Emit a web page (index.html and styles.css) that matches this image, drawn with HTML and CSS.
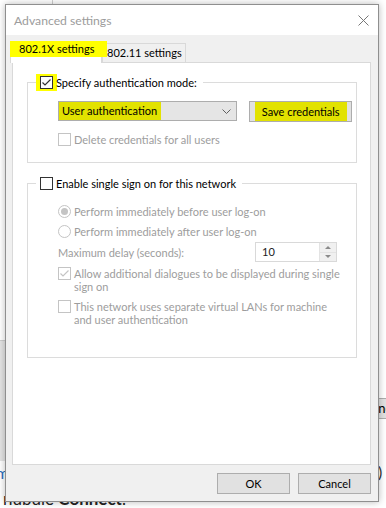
FILE: index.html
```html
<!DOCTYPE html>
<html lang="en">
<head>
    <meta charset="UTF-8">
    <title>Advanced settings</title>
    <link rel="stylesheet" href="styles.css">
</head>
<body>
    <div class="desk">
        <div class="desk-rule"></div>
        <div class="desk-panel"></div>
        <span class="desk-link">lm</span>
        <div class="desk-button">Done</div>
        <span class="desk-paren">)</span>
        <p class="desk-text">nubule <b>Connect</b>.</p>
    </div>

    <div class="dialog">
        <div class="titlebar">
            <span class="title">Advanced settings</span>
            <svg class="close" width="11" height="11" viewBox="0 0 11 11">
                <path d="M0.5 0.5 L10.5 10.5 M10.5 0.5 L0.5 10.5" stroke="#777" stroke-width="1" fill="none"/>
            </svg>
        </div>

        <div class="dialog-body">
            <div class="tabs">
                <div class="tab active"><span class="hl hl-tab">802.1X settings</span></div>
                <div class="tab">802.11 settings</div>
            </div>

            <div class="panel">
                <fieldset class="group group-auth">
                    <legend>
                        <span class="legend-box hl">
                            <span class="box checked">
                                <svg width="11" height="11" viewBox="0 0 11 11"><path d="M1.5 5.5 L4 8 L9.5 2.5" stroke="#333" stroke-width="1.2" fill="none"/></svg>
                            </span>
                        </span>
                        <span class="legend-text">Specify authentication mode:</span>
                    </legend>
                    <div class="group-body">
                        <div class="auth-row">
                            <div class="combo">
                                <span class="hl hl-dark combo-text">User authentication</span>
                                <svg class="chevron" width="9" height="5" viewBox="0 0 9 5"><path d="M0.5 0.5 L4.5 4.5 L8.5 0.5" stroke="#606060" stroke-width="1" fill="none"/></svg>
                            </div>
                            <div class="btn btn-save"><span class="hl hl-dark">Save credentials</span></div>
                        </div>
                        <div class="option disabled option-delete">
                            <span class="box"></span>
                            <span>Delete credentials for all users</span>
                        </div>
                    </div>
                </fieldset>

                <fieldset class="group group-sso">
                    <legend>
                        <span class="legend-box"><span class="box"></span></span>
                        <span class="legend-text">Enable single sign on for this network</span>
                    </legend>
                    <div class="group-body">
                        <div class="option disabled">
                            <span class="radio selected"></span>
                            <span>Perform immediately before user log-on</span>
                        </div>
                        <div class="option disabled option-next">
                            <span class="radio"></span>
                            <span>Perform immediately after user log-on</span>
                        </div>
                        <div class="delay-row">
                            <span class="delay-label">Maximum delay (seconds):</span>
                            <div class="spin">
                                <span class="spin-value">10</span>
                                <div class="spin-buttons">
                                    <span class="spin-up"></span>
                                    <span class="spin-down"></span>
                                </div>
                            </div>
                        </div>
                        <div class="option disabled option-dialogues">
                            <span class="box checked">
                                <svg width="11" height="11" viewBox="0 0 11 11"><path d="M1.5 5.5 L4 8 L9.5 2.5" stroke="#c4c4c4" stroke-width="1.2" fill="none"/></svg>
                            </span>
                            <span>Allow additional dialogues to be displayed during single sign on</span>
                        </div>
                        <div class="option disabled option-vlan">
                            <span class="box"></span>
                            <span>This network uses separate virtual LANs for machine and user authentication</span>
                        </div>
                    </div>
                </fieldset>
            </div>

            <div class="footer">
                <div class="btn btn-footer">OK</div>
                <div class="btn btn-footer">Cancel</div>
            </div>
        </div>
    </div>
</body>
</html>
```

FILE: styles.css
```css
body {
    margin: 0;
    width: 386px;
    height: 508px;
    overflow: hidden;
    position: relative;
    background: #fff;
    font-family: Lato, "Noto Sans", sans-serif;
    font-size: 11px;
    color: #000;
}

/* window behind the dialog */
.desk-rule {
    position: absolute;
    left: 52px;
    top: 0;
    width: 1px;
    height: 10px;
    background: #cfcfcf;
}

.desk-panel {
    position: absolute;
    left: 0;
    top: 340px;
    width: 8px;
    height: 120px;
    border-top: 1px solid #cdcdcd;
    background: #e4e4e4;
}

.desk-link {
    position: absolute;
    left: -8px;
    top: 463px;
    font-size: 16px;
    color: #2a6ebb;
}

.desk-button {
    position: absolute;
    left: 350px;
    top: 398px;
    width: 60px;
    height: 21px;
    box-sizing: border-box;
    border: 1px solid #adadad;
    background: #e1e1e1;
    padding-left: 10px;
    line-height: 19px;
    font-size: 13px;
    white-space: nowrap;
}

.desk-paren {
    position: absolute;
    left: 378px;
    top: 462px;
    font-size: 16px;
    color: #333;
}

.desk-text {
    position: absolute;
    left: 3px;
    top: 488px;
    margin: 0;
    font-size: 17px;
    color: #222;
    white-space: nowrap;
}

/* dialog */
.dialog {
    position: absolute;
    left: 5px;
    top: 4px;
    width: 374px;
    height: 498px;
    box-sizing: border-box;
    border: 1px solid #8f8f8f;
    background: #f0f0f0;
    box-shadow: 0 0 7px rgba(0, 0, 0, 0.28);
    display: flex;
    flex-direction: column;
    z-index: 2;
}

.titlebar {
    height: 30px;
    background: #fff;
    display: flex;
    align-items: center;
    justify-content: space-between;
    padding: 0 9px 0 8px;
}

.title {
    font-size: 12.2px;
    color: #9c9c9c;
    margin-top: 1px;
}

.dialog-body {
    flex: 1;
    display: flex;
    flex-direction: column;
    padding-top: 6px;
    white-space: nowrap;
}

.hl {
    background: #ffff00;
}

.hl-dark {
    background: #e2e200;
}

/* tabs */
.tabs {
    display: flex;
    align-items: flex-end;
    height: 21px;
    padding-left: 4px;
}

.tab {
    box-sizing: border-box;
    height: 19px;
    width: 84px;
    border: 1px solid #d9d9d9;
    border-bottom: none;
    padding-left: 4px;
    line-height: 18px;
}

.tab.active {
    position: relative;
    z-index: 1;
    width: 92px;
    height: 22px;
    margin-bottom: -1px;
    background: #fff;
    padding-left: 0;
}

.hl-tab {
    display: block;
    height: 16px;
    line-height: 16px;
    margin: -1px -6px 0 -1px;
    padding-left: 9px;
}

.panel {
    height: 403px;
    margin: 0 7px 0 6px;
    box-sizing: border-box;
    border: 1px solid #d9d9d9;
    background: #fff;
    padding: 11px 13px 0 14px;
}

/* group boxes */
.group {
    margin: 0;
    padding: 0;
    border: 1px solid #dcdcdc;
    min-width: 0;
}

.group legend {
    margin-left: 8px;
    padding: 0 6px 0 0;
    display: flex;
    align-items: center;
    height: 17px;
}

.legend-box {
    width: 21px;
    height: 17px;
    display: flex;
    align-items: center;
    justify-content: center;
    margin-right: -1px;
}

.legend-text {
    line-height: 17px;
}

.group-body {
    padding: 0 4px 0 30px;
}

.group-auth .group-body {
    padding-top: 10px;
    padding-bottom: 16px;
}

.group-sso {
    margin-top: 12px;
}

.group-sso .group-body {
    padding-top: 13px;
    padding-bottom: 31px;
}

/* checkboxes and radios */
.box {
    box-sizing: border-box;
    width: 13px;
    height: 13px;
    border: 1px solid #333;
    background: #fff;
    display: flex;
    align-items: center;
    justify-content: center;
    flex-shrink: 0;
}

.radio {
    box-sizing: border-box;
    width: 13px;
    height: 13px;
    border: 1px solid #c4c4c4;
    border-radius: 50%;
    background: #fff;
    display: flex;
    align-items: center;
    justify-content: center;
    flex-shrink: 0;
}

.radio.selected::after {
    content: "";
    width: 7px;
    height: 7px;
    border-radius: 50%;
    background: #c4c4c4;
}

.option {
    display: flex;
    align-items: flex-start;
    gap: 3px;
    line-height: 13px;
}

.option.disabled {
    color: #9d9d9d;
}

.option.disabled .box {
    border-color: #c4c4c4;
}

.option-delete {
    margin-top: 11px;
}

.option-next {
    margin-top: 7px;
}

.option-dialogues,
.option-vlan {
    white-space: normal;
    padding-right: 12px;
}

.option-dialogues {
    margin-top: 5px;
}

.option-vlan {
    margin-top: 7px;
}

/* authentication row */
.auth-row {
    display: flex;
    gap: 12px;
}

.combo {
    box-sizing: border-box;
    width: 180px;
    height: 20px;
    border: 1px solid #adadad;
    background: #e5e5e5;
    display: flex;
    align-items: center;
    justify-content: space-between;
    padding: 0 5px 0 0;
}

.combo-text {
    display: block;
    height: 18px;
    line-height: 18px;
    padding: 0 4px 0 3px;
}

.btn {
    box-sizing: border-box;
    border: 1px solid #adadad;
    background: #e1e1e1;
    display: flex;
    align-items: center;
    justify-content: center;
}

.btn-save {
    width: 103px;
    height: 21px;
}

.btn-save .hl {
    display: block;
    height: 19px;
    line-height: 19px;
    padding: 0 7px;
}

/* delay row */
.delay-row {
    display: flex;
    align-items: center;
    justify-content: space-between;
    margin-top: 4px;
    padding-right: 15px;
    color: #9d9d9d;
}

.spin {
    box-sizing: border-box;
    width: 82px;
    height: 20px;
    border: 1px solid #d9d9d9;
    display: flex;
    justify-content: space-between;
    color: #222;
}

.spin-value {
    line-height: 18px;
    padding-left: 6px;
}

.spin-buttons {
    width: 16px;
    display: flex;
    flex-direction: column;
    border-left: 1px solid #e3e3e3;
}

.spin-up,
.spin-down {
    flex: 1;
    background: #f0f0f0;
    display: flex;
    align-items: center;
    justify-content: center;
}

.spin-up {
    border-bottom: 1px solid #e3e3e3;
}

.spin-up::after {
    content: "";
    border: 3px solid transparent;
    border-bottom: 3px solid #8a8a8a;
    margin-top: -3px;
}

.spin-down::after {
    content: "";
    border: 3px solid transparent;
    border-top: 3px solid #8a8a8a;
    margin-bottom: -3px;
}

/* footer */
.footer {
    display: flex;
    justify-content: flex-end;
    gap: 8px;
    padding: 8px 7px 0 0;
}

.btn-footer {
    width: 73px;
    height: 21px;
}
```
